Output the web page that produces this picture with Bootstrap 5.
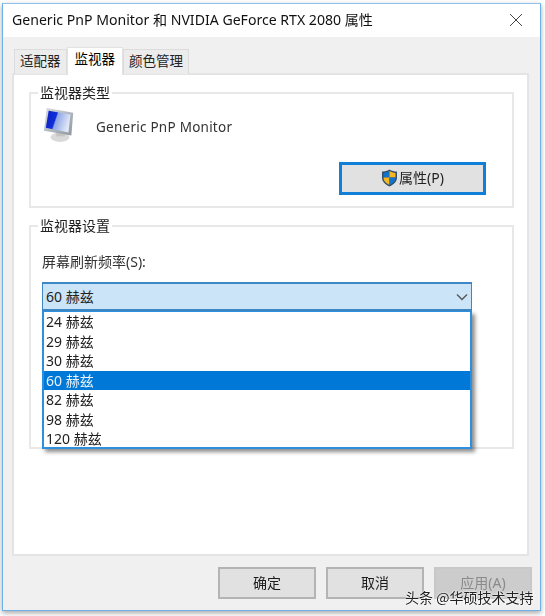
<!DOCTYPE html>
<html lang="zh-CN">
<head>
<meta charset="utf-8">
<title>属性</title>
<link rel="stylesheet" href="https://cdn.jsdelivr.net/npm/bootstrap@5.3.0/dist/css/bootstrap.min.css">
<style>
html,body{margin:0;background:#fff;height:616px;overflow:hidden}
body{font-family:"Noto Sans","Noto Sans CJK SC",sans-serif;font-size:14px;color:#1c1c1c;padding:3px 4px 5px 2px}
.win{width:539px;height:608px;border:1px solid #6fb1e6;border-top-color:#8fc3ec;background:#f0f0f0;box-shadow:0 2px 5px rgba(0,0,0,.35);filter:blur(.3px)}
.titlebar{height:33px;background:#fff;padding:0 9px 2px;font-size:14.1px;color:#111}
.winbody{padding:11px 11px 0 9px}
.wtabs{height:26px;padding-left:2px;border:0;gap:0;align-items:flex-end;flex-wrap:nowrap;margin-bottom:-1px;position:relative;z-index:1}
.wtabs .nav-link{font-size:13.5px;line-height:18px;color:#222;background:#ececec;border:1px solid #dcdcdc;border-bottom:0;border-radius:0;padding:2px 5px 3px 5px;height:25px;margin:0}
.wtabs .nav-link.active{background:#fff;border-color:#e2e2e2;height:28px;padding:2px 7px 4px;position:relative;margin:0 0 -1px}
.panel{height:483px;background:#fff;border:2px solid #e4e4e4;padding:10px 13px 0 15px}
.grp{border:2px solid #e8e8e8;margin:0;padding:0;min-width:0;position:relative}
.grp legend{float:none;width:auto;font-size:14px;line-height:18px;margin:0 0 0 7px;padding:0 2px;color:#222}
.grp1{height:124px;margin-top:-1px}
.grp2{height:232px;margin-top:9px}
.g1row{padding:5px 0 0 12px;height:43px;gap:19px}
.monname{font-size:13.5px;color:#333;letter-spacing:.25px;margin-top:2px}
.uacbtn{width:147px;height:33px;background:#e1e1e1;border:3px solid #0f7fd8;border-radius:0;font-size:14px;padding:0 0 2px;color:#222;margin:17px 26px 0 0;gap:1px}
.uacbtn:hover{background:#e1e1e1;border-color:#0f7fd8}
.reflabel{padding:18px 0 0 11px;line-height:18px;font-size:14px;color:#333}
.combo{position:relative;margin:11px 0 0 11px;width:430px}
.combohead{height:29px;background:#cce4f7;border:1px solid #3d87c4;border-width:2px 1px 2px 1px;padding:0 3px;font-size:14px;color:#222}
.combolist{display:block;position:absolute;top:29px;left:0;width:430px;min-width:0;margin:0;padding:0;background:#fff;border:2px solid #2e8fe0;border-top-width:1px;border-radius:0;height:138px;box-shadow:3px 3px 4px rgba(0,0,0,.45)}
.combolist li{height:19.5px}
.combolist .dropdown-item{padding:0 2px;height:19.5px;line-height:19.5px;font-size:14px;color:#222}
.combolist .dropdown-item.active{background:#0078d7;color:#e9f2fb}
.footbtns{padding:11px 0 0;gap:10px;margin-right:-3px}
.dlgbtn{width:98px;height:32px;background:#e1e1e1;border:2px solid #b4b4b4;border-radius:0;font-size:14px;padding:0 0 2px;color:#1c1c1c}
.dlgbtn:disabled{background:#ccc;border-color:#c8c8c8;color:#8a8a8a;opacity:1}
.wmark{position:absolute;left:405px;top:588px;font-size:14px;line-height:18px;color:#222;text-shadow:0 0 2px #fff,0 0 2px #fff;font-family:"Noto Sans CJK SC",sans-serif}
</style>
</head>
<body>
<div class="win">
  <div class="titlebar d-flex align-items-center justify-content-between">
    <span>Generic PnP Monitor 和 NVIDIA GeForce RTX 2080 属性</span>
    <svg width="14" height="14" viewBox="0 0 14 14" class="me-2"><path d="M1 1l12 12M13 1L1 13" stroke="#444" stroke-width="1" fill="none"/></svg>
  </div>
  <div class="winbody">
    <ul class="nav nav-tabs wtabs">
      <li class="nav-item"><a class="nav-link" href="#">适配器</a></li>
      <li class="nav-item"><a class="nav-link active" href="#">监视器</a></li>
      <li class="nav-item"><a class="nav-link" href="#">颜色管理</a></li>
    </ul>
    <div class="panel">
      <fieldset class="grp grp1">
        <legend>监视器类型</legend>
        <div class="g1row d-flex align-items-center">
          <svg width="34" height="36" viewBox="0 0 36 38" class="align-self-start">
            <defs>
              <linearGradient id="scr" x1="0" y1="0" x2="1" y2="0.3"><stop offset="0" stop-color="#0a1fc0"/><stop offset=".45" stop-color="#1030d8"/><stop offset=".5" stop-color="#8fa6e8"/><stop offset="1" stop-color="#dfe6f5"/></linearGradient>
              <linearGradient id="bez" x1="0" y1="0" x2="1" y2="1"><stop offset="0" stop-color="#d8dde2"/><stop offset="1" stop-color="#8d969e"/></linearGradient>
            </defs>
            <ellipse cx="18" cy="32" rx="10" ry="5" fill="#d9d9d9"/>
            <path d="M14 26h9v5h-9z" fill="#c4c4c4"/>
            <path d="M4 1l28 5-2 24-29-5z" fill="url(#bez)"/>
            <path d="M6 4l23 4-2 19-24-5z" fill="url(#scr)"/>
          </svg>
          <span class="monname">Generic PnP Monitor</span>
        </div>
        <div class="d-flex justify-content-end">
          <button type="button" class="btn uacbtn d-flex align-items-center justify-content-center">
            <svg width="17" height="18" viewBox="0 0 17 18"><path d="M8.5 .5C6 2 4 2.6 1 2.6v6c0 4 3 7 7.5 8.9C13 15.600 16 12.600 16 8.600v-6C13 2.600 11 2 8.500 .5z" fill="#33506e"/><path d="M8.500 2C6.500 3.200 5 3.700 2.500 3.900v4.600h6z" fill="#1173c9"/><path d="M8.500 2c2 1.200 3.500 1.700 6 1.900v4.600h-6z" fill="#f6b81e"/><path d="M2.500 8.500h6v7.300C5 14.300 2.500 12 2.500 8.500z" fill="#f6b81e"/><path d="M14.500 8.500h-6v7.300c3.500-1.500 6-3.800 6-7.300z" fill="#1173c9"/></svg>
            <span>属性(P)</span>
          </button>
        </div>
      </fieldset>
      <fieldset class="grp grp2">
        <legend>监视器设置</legend>
        <div class="reflabel">屏幕刷新频率(S):</div>
        <div class="combo">
          <div class="combohead d-flex align-items-center justify-content-between">
            <span>60 赫兹</span>
            <svg width="12" height="8" viewBox="0 0 12 8"><path d="M1 1.500l5 5 5-5" stroke="#555" stroke-width="1.300" fill="none"/></svg>
          </div>
          <ul class="dropdown-menu show combolist">
            <li><a class="dropdown-item" href="#">24 赫兹</a></li>
            <li><a class="dropdown-item" href="#">29 赫兹</a></li>
            <li><a class="dropdown-item" href="#">30 赫兹</a></li>
            <li><a class="dropdown-item active" href="#">60 赫兹</a></li>
            <li><a class="dropdown-item" href="#">82 赫兹</a></li>
            <li><a class="dropdown-item" href="#">98 赫兹</a></li>
            <li><a class="dropdown-item" href="#">120 赫兹</a></li>
          </ul>
        </div>
      </fieldset>
    </div>
    <div class="d-flex justify-content-end footbtns">
      <button type="button" class="btn dlgbtn">确定</button>
      <button type="button" class="btn dlgbtn">取消</button>
      <button type="button" class="btn dlgbtn" disabled>应用(A)</button>
    </div>
  </div>
</div>
<div class="wmark">头条 @华硕技术支持</div>
<script src="https://cdn.jsdelivr.net/npm/bootstrap@5.3.0/dist/js/bootstrap.bundle.min.js"></script>
</body>
</html>
